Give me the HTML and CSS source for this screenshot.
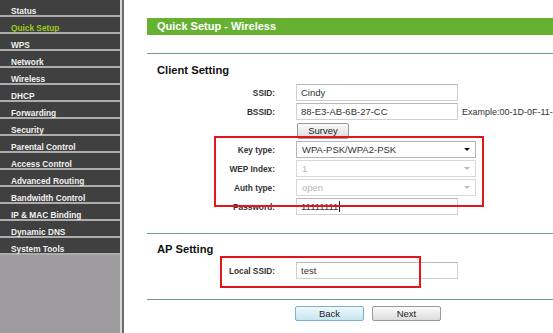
FILE: index.html
```html
<!DOCTYPE html>
<html lang="en">
<head>
    <meta charset="UTF-8" />
    <meta name="viewport" content="width=device-width, initial-scale=1.0" />
    <title>Quick Setup - Wireless</title>
    <link rel="stylesheet" href="styles.css">
</head>
<body>
<div class="frame">
    <nav class="menu">
        <a href="#">Status</a>
        <a href="#" class="active">Quick Setup</a>
        <a href="#">WPS</a>
        <a href="#">Network</a>
        <a href="#">Wireless</a>
        <a href="#">DHCP</a>
        <a href="#">Forwarding</a>
        <a href="#">Security</a>
        <a href="#">Parental Control</a>
        <a href="#">Access Control</a>
        <a href="#">Advanced Routing</a>
        <a href="#">Bandwidth Control</a>
        <a href="#">IP &amp; MAC Binding</a>
        <a href="#">Dynamic DNS</a>
        <a href="#">System Tools</a>
    </nav>

    <main class="content">
        <div class="title">Quick Setup - Wireless</div>
        <hr class="divider">

        <section class="group">
            <h2>Client Setting</h2>
            <div class="fields first">
                <label>SSID:</label>
                <div class="field"><input class="text" value="Cindy"></div>
                <label>BSSID:</label>
                <div class="field"><input class="text" value="88-E3-AB-6B-27-CC"><span class="hint">Example:00-1D-0F-11-22-33</span></div>
                <span></span>
                <div class="field"><button class="button survey">Survey</button></div>
            </div>
            <div class="fields marked">
                <label>Key type:</label>
                <div class="field"><div class="select"><span>WPA-PSK/WPA2-PSK</span><i class="arrow"></i></div></div>
                <label>WEP Index:</label>
                <div class="field"><div class="select disabled"><span>1</span><i class="arrow"></i></div></div>
                <label>Auth type:</label>
                <div class="field"><div class="select disabled"><span>open</span><i class="arrow"></i></div></div>
                <label>Password:</label>
                <div class="field"><div class="text">11111111<span class="caret"></span></div></div>
            </div>
        </section>

        <hr class="divider section">

        <section class="group">
            <h2 class="ap">AP Setting</h2>
            <div class="fields marked local">
                <label>Local SSID:</label>
                <div class="field"><input class="text" value="test"></div>
            </div>
        </section>

        <hr class="divider bottom">

        <div class="actions">
            <button class="button wide focused">Back</button>
            <button class="button wide">Next</button>
        </div>
    </main>
</div>
</body>
</html>
```

FILE: styles.css
```css
body {
    margin: 0;
    font-family: "Liberation Sans", Arial, sans-serif;
    background-color: #fff;
    color: #333;
}

.frame {
    display: flex;
    height: 333px;
    overflow: hidden;
}

.menu {
    width: 120px;
    flex: none;
    background-color: #9d9b9d;
    border-right: 2px solid #d6d6d6;
}

.menu a {
    display: block;
    height: 11px;
    padding: 4px 0 0 11px;
    border-bottom: 2px solid #adadad;
    background-color: #404040;
    color: #f2f2f2;
    font-weight: bold;
    font-size: 8.3px;
    line-height: 14px;
    text-decoration: none;
}

.menu a.active {
    color: #9ccc18;
}

.content {
    flex: 1;
    min-width: 0;
    border-left: 2px solid #6a6a6a;
    padding: 18px 0 0 23px;
}

.title {
    height: 17px;
    line-height: 17px;
    padding-left: 10px;
    background-color: #66b132;
    color: #fff;
    font-weight: bold;
    font-size: 11px;
}

.divider {
    height: 1px;
    margin: 18px 0 0;
    border: 0;
    background-color: #6e9a97;
}

.divider.section {
    margin-top: 17px;
}

.divider.bottom {
    margin-top: 19px;
}

.group h2 {
    margin: 8px 0 0 10px;
    font-size: 11.2px;
    line-height: 16px;
    color: #111;
}

.group h2.ap {
    margin-top: 7px;
}

.fields {
    display: grid;
    grid-template-columns: 128px auto;
    grid-auto-rows: 19px;
    column-gap: 21px;
    align-items: center;
    justify-content: start;
}

.fields.first {
    margin-top: 5px;
}

.fields.local {
    margin-top: 4px;
}

.fields label {
    text-align: right;
    font-weight: bold;
    font-size: 8.3px;
    color: #333;
}

.field {
    display: flex;
    align-items: center;
    gap: 4px;
}

.text {
    display: flex;
    align-items: center;
    width: 162px;
    height: 17px;
    box-sizing: border-box;
    margin: 0;
    padding: 0 4px;
    border: 1px solid #d0d0d0;
    border-top-color: #b8b8b8;
    background-color: #fff;
    font-family: "Liberation Sans", Arial, sans-serif;
    font-size: 9.5px;
    color: #333;
    outline: none;
}

.caret {
    width: 1px;
    height: 11px;
    margin-left: 1px;
    background-color: #222;
}

.hint {
    font-size: 9px;
    color: #333;
    white-space: nowrap;
}

.select {
    display: flex;
    align-items: center;
    justify-content: space-between;
    width: 180px;
    height: 17px;
    box-sizing: border-box;
    padding: 0 5px;
    border: 1px solid #b5b5b5;
    font-size: 9.5px;
    color: #333;
}

.select.disabled {
    border-color: #d8d8d8;
    color: #b8b8b8;
}

.arrow {
    width: 0;
    height: 0;
    border-left: 3px solid transparent;
    border-right: 3px solid transparent;
    border-top: 3px solid #111;
}

.select.disabled .arrow {
    border-top-color: #b8b8b8;
}

.marked {
    position: relative;
}

.marked::after {
    content: "";
    position: absolute;
    left: 67px;
    top: -4px;
    width: 270px;
    height: 71px;
    box-sizing: border-box;
    border: 2px solid #e3161c;
    pointer-events: none;
}

.marked.local::after {
    left: 73px;
    top: -5px;
    width: 201px;
    height: 32px;
}

.button {
    height: 15px;
    padding: 0;
    border: 1px solid #9a9a9a;
    border-radius: 2px;
    background: linear-gradient(#fbfbfb, #dcdcdc);
    font-family: "Liberation Sans", Arial, sans-serif;
    font-size: 9.5px;
    color: #222;
}

.button.survey {
    width: 52px;
    height: 16px;
    margin-left: 1px;
}

.button.wide {
    width: 69px;
}

.button.focused {
    border-color: #78b2cc;
    background: linear-gradient(#eef8fc, #c8e5f1);
}

.actions {
    display: flex;
    gap: 8px;
    margin-top: 6px;
    padding-left: 148px;
}
```
